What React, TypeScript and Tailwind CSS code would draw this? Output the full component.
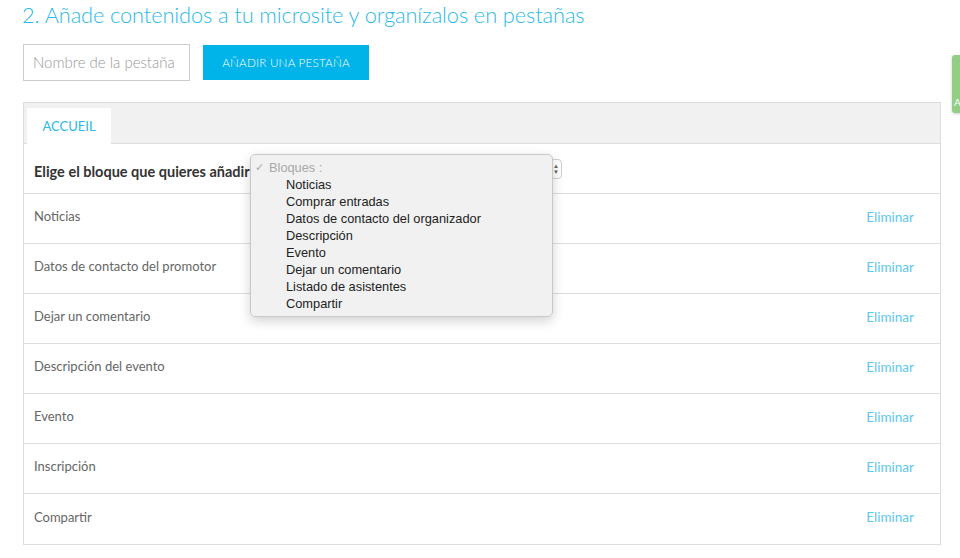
import React from "react";

const rows = [
  "Noticias",
  "Datos de contacto del promotor",
  "Dejar un comentario",
  "Descripción del evento",
  "Evento",
  "Inscripción",
  "Compartir",
];

const options = [
  "Noticias",
  "Comprar entradas",
  "Datos de contacto del organizador",
  "Descripción",
  "Evento",
  "Dejar un comentario",
  "Listado de asistentes",
  "Compartir",
];

export default function App() {
  return (
    <div className="relative w-[960px] h-[558px] overflow-hidden bg-white font-['Lato',sans-serif] text-[#555]">
      <div className="pl-[23px] pr-[19px] pt-[3px]">
        <h1 className="text-[21.8px] font-light text-[#29b9e9] leading-[24px] tracking-[-0.1px] -ml-px whitespace-nowrap">
          2. Añade contenidos a tu microsite y organízalos en pestañas
        </h1>
        <div className="mt-[17px] flex items-center gap-[13px]">
          <div className="w-[167px] h-[37px] border border-[#cccccc] flex items-center px-[9px] text-[15px] font-light text-[#999]">
            Nombre de la pestaña
          </div>
          <button className="w-[166px] h-[35px] bg-[#00b3e9] text-white text-[11.7px] font-light tracking-[0.2px]">
            AÑADIR UNA PESTAÑA
          </button>
        </div>
        <div className="mt-[21px] border border-[#dddddd]">
          <div className="h-[41px] bg-[#f1f1f1] border-b border-[#dddddd] flex items-end pl-[3px]">
            <div className="w-[84px] h-[36px] bg-white flex items-center justify-center text-[13px] text-[#29b9e9] -mb-px pt-[1px]">
              ACCUEIL
            </div>
          </div>
          <div className="relative h-[50px] border-b border-[#dddddd] flex items-center pl-[10px] pr-[378px]">
            <span className="mt-[6px] text-[14.5px] font-bold text-[#333] whitespace-nowrap">Elige el bloque que quieres añadir</span>
            <div className="ml-auto w-[12px] h-[20px] border border-[#cfcfcf] rounded-[4px] flex flex-col items-center justify-center text-[6px] leading-[6px] text-[#666]">
              <span>▲</span>
              <span>▼</span>
            </div>
          </div>
          {rows.map((r, i) => (
            <div
              key={r}
              className={`h-[50px] flex items-center justify-between pl-[10px] pr-[26px] pb-[3px] text-[13px] text-[#666] ${i < rows.length - 1 ? "border-b border-[#dddddd]" : ""}`}
            >
              <span>{r}</span>
              <span className="text-[13.5px] text-[#5cc8ef]">Eliminar</span>
            </div>
          ))}
        </div>
      </div>

      <div className="absolute left-[250px] top-[154px] w-[303px] h-[163px] rounded-[5px] border border-[#c8c8c8] bg-[#f0f0f0]/95 shadow-[0_4px_12px_rgba(0,0,0,0.18)] pt-[4px] font-['Liberation_Sans',Arial,sans-serif] text-[12.8px] leading-[17px] text-[#222]">
        <div className="flex items-center pl-[4px] text-[#a8a8a8]">
          <span className="w-[14px] text-[11px]">✓</span>
          <span>Bloques :</span>
        </div>
        {options.map((o) => (
          <div key={o} className="pl-[35px]">
            {o}
          </div>
        ))}
      </div>

      <div className="absolute left-[952px] top-[55px] w-[10px] h-[58px] rounded-l-[3px] bg-[#92cf85] shadow-[0_1px_3px_rgba(0,0,0,0.2)] overflow-hidden">
        <span className="absolute left-[2px] top-[40px] text-[10px] text-white">A</span>
      </div>
    </div>
  );
}
